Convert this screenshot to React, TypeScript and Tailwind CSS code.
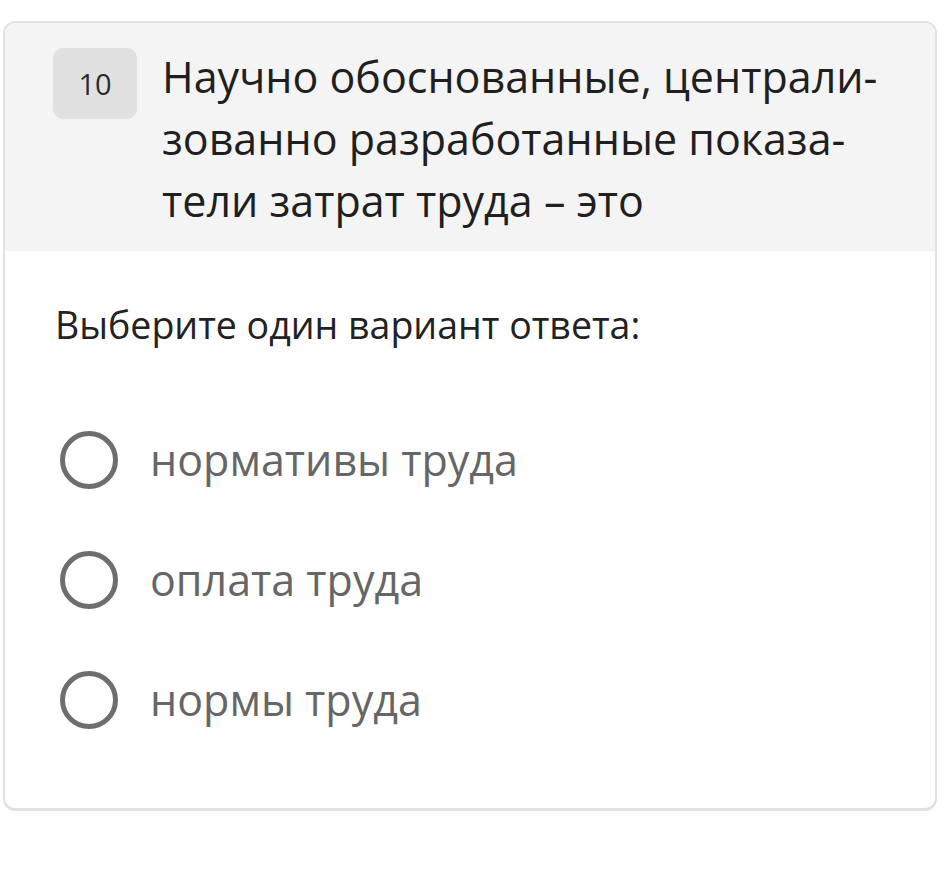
const options = ["нормативы труда", "оплата труда", "нормы труда"];

export default function App() {
  return (
    <div className="min-h-[872px] bg-white px-[3px] pt-[21px] font-['Open_Sans',sans-serif]">
      <div className="overflow-hidden rounded-[12px] border-2 border-b-[3px] border-[#e2e2e2] bg-white">
        <div className="flex items-start bg-[#f4f4f4] pb-[19px] pl-[48px] pr-[20px] pt-[23px]">
          <div className="mt-[2px] flex h-[71px] w-[84px] shrink-0 items-center justify-center rounded-[10px] bg-[#e1e1e1] text-[29px] text-[#2b2b2b]">
            10
          </div>
          <p className="ml-[25px] text-[43px] leading-[62px] text-[#1f1f1f]">
            Научно обоснованные, централи-
            <br />
            зованно разработанные показа-
            <br />
            тели затрат труда – это
          </p>
        </div>

        <div className="px-[50px] pb-[79px] pt-[50px]">
          <p className="text-[37.5px] leading-[48px] text-[#222]">
            Выберите один вариант ответа:
          </p>
          <div className="mt-[82px] flex flex-col gap-[62px] pl-[5px]">
            {options.map((option) => (
              <label key={option} className="flex h-[58px] items-center gap-[32px]">
                <span className="h-[58px] w-[58px] shrink-0 rounded-full border-[5px] border-[#6e6e6e]" />
                <span className="text-[43px] leading-[58px] text-[#666]">{option}</span>
              </label>
            ))}
          </div>
        </div>
      </div>
    </div>
  );
}
